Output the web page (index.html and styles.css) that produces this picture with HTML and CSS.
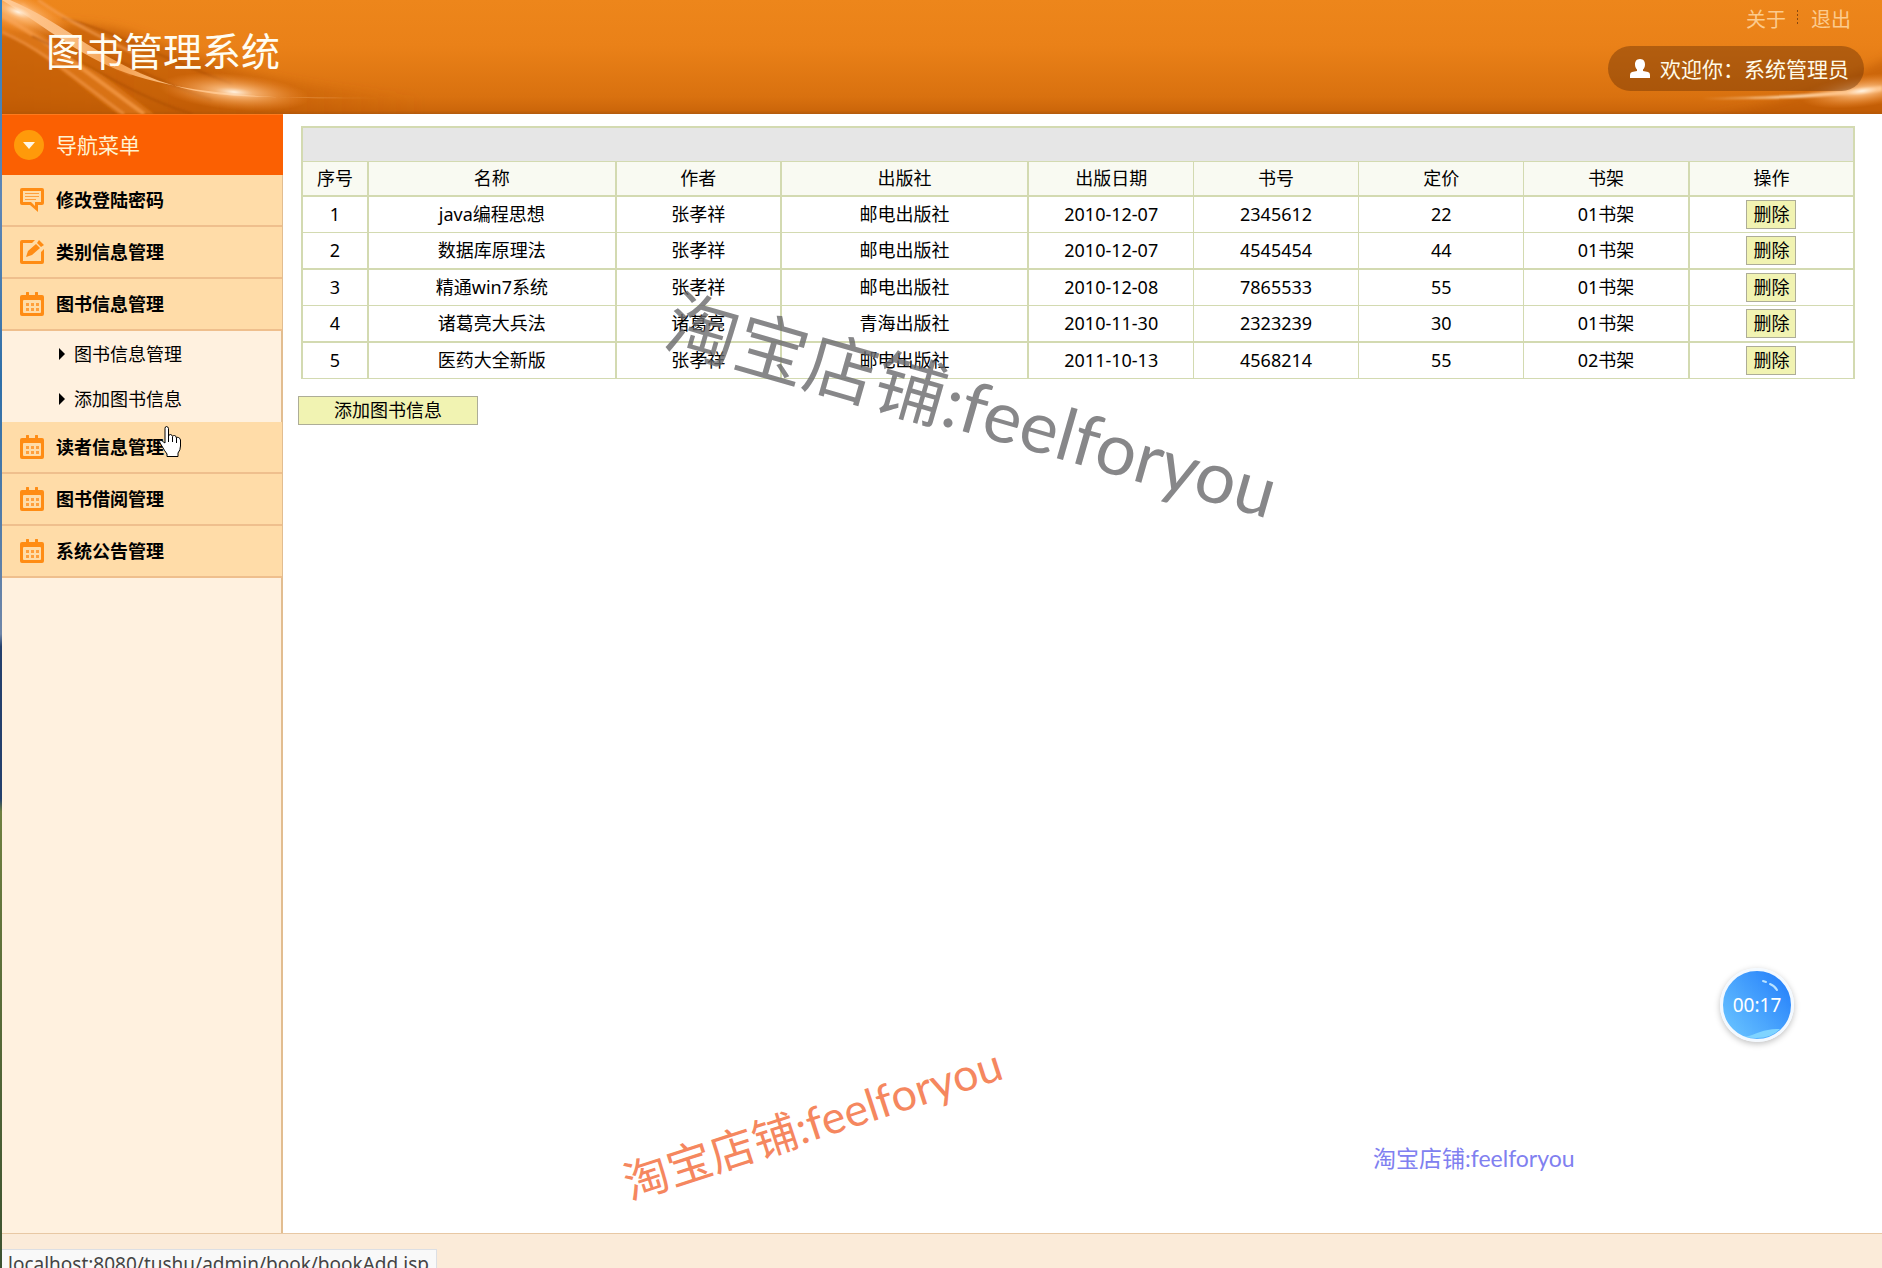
FILE: index.html
```html
<!DOCTYPE html>
<html lang="zh-CN">

<head>
    <meta charset="UTF-8">
    <meta name="viewport" content="width=device-width, initial-scale=1.0">
    <title>图书管理系统</title>
    <link rel="stylesheet" href="styles.css">
</head>

<body>
    <!-- 公用图标 -->
    <svg class="defs" width="0" height="0">
        <symbol id="ico-date" viewBox="0 0 24 24">
            <path fill="#ff8c14" fill-rule="evenodd" d="M2 3h4V1a1 1 0 0 1 3 0v2h6V1a1 1 0 0 1 3 0v2h4q2 0 2 2v17q0 2-2 2H2q-2 0-2-2V5q0-2 2-2zM4 8q-1 0-1 1v11q0 1 1 1h16q1 0 1-1V9q0-1-1-1z" />
            <path fill="#ff9f3c" d="M6 11h3v3H6zm5 0h3v3h-3zm5 0h3v3h-3zM6 16h3v3H6zm5 0h3v3h-3zm5 0h3v3h-3z" />
        </symbol>
    </svg>
    <div class="page">
        <div class="header">
            <svg class="light light-left" width="430" height="114" viewBox="0 0 430 114">
                <defs>
                    <radialGradient id="glow">
                        <stop offset="0" stop-color="#fff3e2" />
                        <stop offset="0.25" stop-color="#ffc48a" stop-opacity="0.8" />
                        <stop offset="1" stop-color="#ff9a3c" stop-opacity="0" />
                    </radialGradient>
                    <linearGradient id="shade" x1="0" x2="1" y1="0" y2="0">
                        <stop offset="0" stop-color="#b85300" stop-opacity="0.6" />
                        <stop offset="0.5" stop-color="#b85300" stop-opacity="0.55" />
                        <stop offset="1" stop-color="#b85300" stop-opacity="0" />
                    </linearGradient>
                    <linearGradient id="streak" x1="0" x2="1" y1="0" y2="0">
                        <stop offset="0" stop-color="#ffe3c4" />
                        <stop offset="0.3" stop-color="#f5a150" />
                        <stop offset="0.6" stop-color="#ffdcb4" />
                        <stop offset="1" stop-color="#ffb063" stop-opacity="0" />
                    </linearGradient>
                    <filter id="soft" x="-20%" y="-20%" width="140%" height="140%">
                        <feGaussianBlur stdDeviation="5" />
                    </filter>
                    <filter id="thin" x="-20%" y="-20%" width="140%" height="140%">
                        <feGaussianBlur stdDeviation="1" />
                    </filter>
                </defs>
                <path fill="url(#shade)" filter="url(#soft)" d="M-10 34C60 20 100 20 150 40S270 88 420 96V124H-10z" />
                <g filter="url(#thin)">
                    <path fill="#e57f1c" fill-opacity="0.6" d="M0 12C40 32 90 66 152 114H116C80 88 40 52 0 30z" />
                    <path fill="none" stroke="#f59a46" stroke-width="4" stroke-opacity="0.8" d="M0 16C40 38 80 68 142 114" />
                    <path fill="none" stroke="#ee9040" stroke-width="3" stroke-opacity="0.8" d="M0 32C45 52 80 84 122 114" />
                    <path fill="none" stroke="#a94b00" stroke-width="2" stroke-opacity="0.6" d="M30 36C80 60 130 96 190 114M40 26C100 50 140 76 210 100M60 18C110 30 150 54 230 84" />
                    <path fill="none" stroke="#f7a45a" stroke-width="3" stroke-opacity="0.6" d="M36 0C64 20 96 36 150 62M20 4C50 30 90 56 130 74" />
                </g>
                <path fill="url(#streak)" d="M8 0C60 22 90 54 150 78S260 96 380 98C270 100 200 94 144 79S60 38 0 0z" />
                <ellipse cx="16" cy="12" rx="56" ry="20" fill="url(#glow)" transform="rotate(20 16 12)" />
                <ellipse cx="232" cy="92" rx="76" ry="18" fill="url(#glow)" transform="rotate(5 232 92)" />
            </svg>
            <svg class="light light-right" width="260" height="114" viewBox="0 0 260 114">
                <path fill="#b85300" fill-opacity="0.5" filter="url(#soft)" d="M60 124C150 104 210 90 280 50V124z" />
                <path fill="#ffd9ae" filter="url(#thin)" d="M80 98C160 98 210 92 260 86V91C210 97 160 100 80 98z" />
                <ellipse cx="240" cy="91" rx="62" ry="16" fill="url(#glow)" transform="rotate(-7 240 91)" />
            </svg>
            <h1 class="logo">图书管理系统</h1>
            <div class="header-right">
                <div class="links">
                    <a href="#">关于</a>
                    <a href="#">退出</a>
                </div>
                <div class="welcome">
                    <svg width="20" height="20" viewBox="0 0 20 20">
                        <path fill="#fff" d="M10 0c4 0 5 3 5 5.500 0 2.500-1 4-2 5v1.500l5 1q2 .5 2 3v3H0v-3q0-2.500 2-3l5-1V10.500c-1-1-2-2.500-2-5C5 3 6 0 10 0z" />
                    </svg>
                    <span>欢迎你：系统管理员</span>
                </div>
            </div>
        </div>

        <div class="middle">
            <div class="sidebar">
                <div class="menu-title">
                    <svg width="30" height="31" viewBox="0 0 30 31">
                        <circle cx="15" cy="15" r="15" fill="#ff9a0a" />
                        <path fill="#fff8e6" d="M9 12h12l-6 7z" />
                    </svg>
                    <span>导航菜单</span>
                </div>
                <ul class="menu">
                    <li>
                        <a class="item" href="#">
                            <svg width="24" height="24" viewBox="0 0 24 24">
                                <path fill="#ff8c14" fill-rule="evenodd" d="M2 0h20q2 0 2 2v13q0 2-2 2h-4v7l-8-7H2q-2 0-2-2V2q0-2 2-2zM3 3v11h8l4 4v-4h6V3z" />
                                <path fill="none" stroke="#ff9f3c" d="M5 5.500h14M5 8.500h14M5 11.500h11" />
                            </svg>
                            <span>修改登陆密码</span>
                        </a>
                    </li>
                    <li>
                        <a class="item" href="#">
                            <svg width="24" height="24" viewBox="0 0 24 24">
                                <path fill="#ff8c14" d="M2 0h13l-3 3H3v18h18v-9l3-3v13q0 2-2 2H2q-2 0-2-2V2q0-2 2-2z" />
                                <path fill="#ff8c14" d="M16 4l4 4-8 7-6 2 2-6zM17 3l2-3 5 5-3 2z" />
                            </svg>
                            <span>类别信息管理</span>
                        </a>
                    </li>
                    <li>
                        <a class="item" href="#"><svg width="24" height="24"><use href="#ico-date" /></svg><span>图书信息管理</span></a>
                        <ul class="submenu">
                            <li><a href="#">图书信息管理</a></li>
                            <li><a href="#">添加图书信息</a></li>
                        </ul>
                    </li>
                    <li><a class="item" href="#"><svg width="24" height="24"><use href="#ico-date" /></svg><span>读者信息管理</span></a></li>
                    <li><a class="item" href="#"><svg width="24" height="24"><use href="#ico-date" /></svg><span>图书借阅管理</span></a></li>
                    <li><a class="item" href="#"><svg width="24" height="24"><use href="#ico-date" /></svg><span>系统公告管理</span></a></li>
                </ul>
            </div>

            <div class="main">
                <table class="books">
                    <colgroup>
                        <col class="c-no">
                        <col class="c-wide">
                        <col class="c-mid">
                        <col class="c-wide">
                        <col class="c-mid">
                        <col class="c-mid">
                        <col class="c-mid">
                        <col class="c-mid">
                        <col class="c-mid">
                    </colgroup>
                    <thead>
                        <tr class="bar">
                            <td colspan="9"></td>
                        </tr>
                        <tr>
                            <th>序号</th>
                            <th>名称</th>
                            <th>作者</th>
                            <th>出版社</th>
                            <th>出版日期</th>
                            <th>书号</th>
                            <th>定价</th>
                            <th>书架</th>
                            <th>操作</th>
                        </tr>
                    </thead>
                    <tbody>
                        <tr>
                            <td>1</td>
                            <td>java编程思想</td>
                            <td>张孝祥</td>
                            <td>邮电出版社</td>
                            <td>2010-12-07</td>
                            <td>2345612</td>
                            <td>22</td>
                            <td>01书架</td>
                            <td><button type="button" class="btn">删除</button></td>
                        </tr>
                        <tr>
                            <td>2</td>
                            <td>数据库原理法</td>
                            <td>张孝祥</td>
                            <td>邮电出版社</td>
                            <td>2010-12-07</td>
                            <td>4545454</td>
                            <td>44</td>
                            <td>01书架</td>
                            <td><button type="button" class="btn">删除</button></td>
                        </tr>
                        <tr>
                            <td>3</td>
                            <td>精通win7系统</td>
                            <td>张孝祥</td>
                            <td>邮电出版社</td>
                            <td>2010-12-08</td>
                            <td>7865533</td>
                            <td>55</td>
                            <td>01书架</td>
                            <td><button type="button" class="btn">删除</button></td>
                        </tr>
                        <tr>
                            <td>4</td>
                            <td>诸葛亮大兵法</td>
                            <td>诸葛亮</td>
                            <td>青海出版社</td>
                            <td>2010-11-30</td>
                            <td>2323239</td>
                            <td>30</td>
                            <td>01书架</td>
                            <td><button type="button" class="btn">删除</button></td>
                        </tr>
                        <tr>
                            <td>5</td>
                            <td>医药大全新版</td>
                            <td>张孝祥</td>
                            <td>邮电出版社</td>
                            <td>2011-10-13</td>
                            <td>4568214</td>
                            <td>55</td>
                            <td>02书架</td>
                            <td><button type="button" class="btn">删除</button></td>
                        </tr>
                    </tbody>
                </table>
                <button type="button" class="btn btn-add">添加图书信息</button>
            </div>
        </div>

        <div class="footer"></div>
    </div>

    <!-- 浮动层 -->
    <div class="status">localhost:8080/tushu/admin/book/bookAdd.jsp</div>
    <div class="mark mark-gray">淘宝店铺:feelforyou</div>
    <div class="mark mark-orange">淘宝店铺:feelforyou</div>
    <div class="mark mark-blue">淘宝店铺:feelforyou</div>
    <div class="timer">
        <svg width="68" height="68" viewBox="0 0 68 68">
            <path fill="#7fd4ff" d="M22 66C34 63 42 57 57 58Q46 70 22 66z" />
            <path fill="none" stroke="#b9e2ff" stroke-width="2" stroke-linecap="round" d="M40 10l3 1M47 13q5 2 7 6" />
        </svg>
        <span>00:17</span>
    </div>
    <svg class="cursor" width="22" height="31" viewBox="0 0 22 31">
        <path fill="#fff" stroke="#000" d="M6 17V2.500Q6 .5 7.500 .5T9.500 2.500V10Q10 8.500 11.500 8.500T13.500 10.500Q14 9.500 15.500 9.500T17.500 12Q18 11 19.500 11.500T21.500 14V20Q21.500 24 19 27V30.500H8V28Q5 24 3.500 21L1 17Q0 15 1.500 14.500T4.500 16z" />
        <path fill="none" stroke="#000" d="M9.500 10v6M13.500 11v5M17.500 12v5" />
    </svg>
</body>

</html>
```
FILE: styles.css
```css
* {
    box-sizing: border-box;
}

body {
    margin: 0;
    overflow: hidden;
    font-family: "Noto Sans", "Noto Sans CJK SC", sans-serif;
    font-size: 18px;
    line-height: 24px;
    color: #000;
    background: linear-gradient(#2f7fc0, #5f86b4 16%, #2f6fa8 30%, #6f86a8 50%, #24406c 51%, #24406c 63%, #6f8040 64%, #3c5230 100%);
}

a {
    color: inherit;
    text-decoration: none;
}

ul {
    margin: 0;
    padding: 0;
    list-style: none;
}

.defs {
    position: absolute;
}

.page {
    display: flex;
    flex-direction: column;
    height: 100vh;
    margin-left: 2px;
    background-color: #fff;
}

/* 头部 */
.header {
    position: relative;
    display: flex;
    justify-content: space-between;
    height: 114px;
    padding: 0 18px 0 44px;
    background: linear-gradient(#ed861b, #ea8118 40%, #d9710f 85%, #cc660a 97%, #b35a0c);
}

.light {
    position: absolute;
    top: 0;
}

.light-left {
    left: 0;
}

.light-right {
    right: 0;
}

.logo {
    position: relative;
    margin: 0;
    padding-top: 24px;
    font-size: 39px;
    font-weight: normal;
    line-height: 54px;
    color: #fffdf2;
}

.header-right {
    position: relative;
    display: flex;
    flex-direction: column;
    align-items: flex-end;
    gap: 14px;
    padding-top: 8px;
}

.links {
    display: flex;
    padding-right: 13px;
    font-size: 20px;
    color: #fccb8e;
}

.links a {
    padding-left: 13px;
}

.links a:first-child {
    padding-right: 12px;
    background: repeating-linear-gradient(#8a4a10 0 2px, transparent 2px 4px) right 2px / 1px 16px no-repeat;
}

.welcome {
    display: flex;
    align-items: center;
    gap: 10px;
    height: 45px;
    padding: 0 15px 0 22px;
    border-radius: 23px;
    font-size: 21px;
    color: #fffbe8;
    background-color: rgba(110, 50, 5, 0.45);
}

/* 中间 */
.middle {
    display: flex;
    flex: 1;
}

.sidebar {
    width: 281px;
    border-right: 2px solid #e2bd90;
    background-color: #fff1df;
}

.menu-title {
    display: flex;
    align-items: center;
    gap: 12px;
    height: 61px;
    margin-right: -2px;
    padding-left: 12px;
    border-top: 1px solid #ff7a1c;
    font-size: 21px;
    color: #fff3d0;
    background-color: #fb6002;
}

.item {
    display: flex;
    align-items: center;
    gap: 12px;
    height: 52px;
    margin-right: -1px;
    padding-left: 18px;
    border-bottom: 2px solid #efbf8d;
    font-weight: bold;
    background-color: #ffdca8;
}

.submenu {
    padding-bottom: 1px;
}

.submenu a {
    display: flex;
    align-items: center;
    gap: 9px;
    height: 45px;
    padding-left: 57px;
}

.submenu a::before {
    content: "";
    border-top: 6px solid transparent;
    border-bottom: 6px solid transparent;
    border-left: 6px solid #000;
}

.main {
    flex: 1;
    padding: 12px 27px 0 15px;
}

/* 表格 */
.books {
    width: calc(100% - 3px);
    margin: 0 0 17px 3px;
    border: 2px solid #d3dab1;
    border-bottom-width: 1px;
    border-collapse: collapse;
    table-layout: fixed;
    text-align: center;
}

.c-no {
    width: 4%;
}

.c-wide {
    width: 15%;
}

.c-mid {
    width: 10%;
}

.books td,
.books th {
    height: 36px;
    padding: 0;
    border: 1px solid #d3dab1;
    font-weight: normal;
}

.books th {
    height: 35px;
    border-bottom-width: 2px;
    background-color: #f9faf2;
}

.books .bar td {
    height: 34px;
    background-color: #e6e6e6;
}

.books tbody tr:nth-child(even) td {
    height: 37px;
    border-bottom-width: 2px;
}

.books th:nth-child(-n+4),
.books th:nth-child(8),
.books tbody td:nth-child(-n+4),
.books tbody td:nth-child(8) {
    border-right-width: 2px;
}

.btn {
    height: 29px;
    padding: 0 6px;
    border: 1px solid #adad97;
    font: inherit;
    line-height: 26px;
    color: #000;
    background-color: #f1f3b2;
    vertical-align: middle;
}

.btn-add {
    width: 180px;
}

.footer {
    height: 35px;
    border-top: 1px solid #e8c8a4;
    background-color: #fbebd9;
}

/* 浮动层 */
.status {
    position: absolute;
    left: 2px;
    bottom: -11px;
    height: 30px;
    padding: 0 7px 0 6px;
    border: 1px solid #dcdfe4;
    border-left: none;
    font-size: 19px;
    line-height: 28px;
    color: #444;
    background-color: #f9f9f9;
}

.mark {
    position: absolute;
    font-family: Lato, "Noto Sans CJK SC", sans-serif;
    line-height: 1;
    white-space: nowrap;
    pointer-events: none;
    transform-origin: left center;
}

.mark-gray {
    left: 669px;
    top: 282px;
    font-size: 72px;
    color: rgba(105, 105, 108, 0.8);
    transform: rotate(16deg);
}

.mark-orange {
    left: 625px;
    top: 1162px;
    font-size: 45px;
    color: #f5875f;
    transform: rotate(-18deg);
}

.mark-blue {
    left: 1373px;
    top: 1147px;
    font-size: 23px;
    color: #8080f0;
}

.timer {
    position: absolute;
    right: 88px;
    bottom: 226px;
    display: flex;
    align-items: center;
    justify-content: center;
    width: 74px;
    height: 74px;
    border: 3px solid #f3f9ff;
    border-radius: 50%;
    font-size: 19px;
    color: #fff;
    background: linear-gradient(50deg, #62bdff 15%, #2b86fb 85%);
    box-shadow: 0 2px 6px rgba(0, 0, 0, 0.25);
}

.timer svg {
    position: absolute;
    left: 0;
    top: 0;
}

.timer span {
    position: relative;
}

.cursor {
    position: absolute;
    left: 159px;
    top: 426px;
}
```
